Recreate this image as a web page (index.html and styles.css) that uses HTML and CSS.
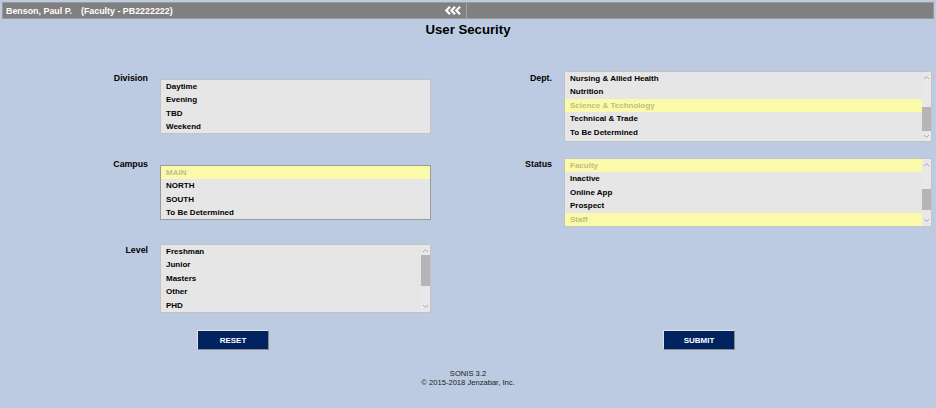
FILE: index.html
```html
<!DOCTYPE html>
<html>
<head>
<meta charset="utf-8">
<title>User Security</title>
<link rel="stylesheet" href="styles.css">
</head>
<body>
<div class="topbar">
  <div class="tb-left">
    <span class="who">Benson, Paul P.</span>
    <span class="role">(Faculty - PB2222222)</span>
    <svg class="collapse" width="18" height="9" viewBox="0 0 18 9">
      <polyline points="5,0.8 1.4,4.5 5,8.2" />
      <polyline points="10,0.8 6.4,4.5 10,8.2" />
      <polyline points="15,0.8 11.4,4.5 15,8.2" />
    </svg>
  </div>
  <div class="tb-right"></div>
</div>

<h1 class="title">User Security</h1>

<div class="form">
  <div class="lbl">Division</div>
  <div class="cell">
    <div class="list">
      <div class="items">
        <div class="item">Daytime</div>
        <div class="item">Evening</div>
        <div class="item">TBD</div>
        <div class="item">Weekend</div>
      </div>
    </div>
  </div>

  <div class="lbl">Dept.</div>
  <div class="cell">
    <div class="list">
      <div class="items">
        <div class="item">Nursing &amp; Allied Health</div>
        <div class="item">Nutrition</div>
        <div class="item sel">Science &amp; Technology</div>
        <div class="item">Technical &amp; Trade</div>
        <div class="item">To Be Determined</div>
      </div>
      <div class="sb">
        <div class="sb-arrow"><svg width="7" height="5" viewBox="0 0 7 5"><polyline points="1,4 3.5,1.5 6,4"/></svg></div>
        <div class="sb-track"><div class="sb-thumb thumb-dept"></div></div>
        <div class="sb-arrow"><svg width="7" height="5" viewBox="0 0 7 5"><polyline points="1,1 3.5,3.5 6,1"/></svg></div>
      </div>
    </div>
  </div>

  <div class="lbl">Campus</div>
  <div class="cell">
    <div class="list focus">
      <div class="items">
        <div class="item sel">MAIN</div>
        <div class="item">NORTH</div>
        <div class="item">SOUTH</div>
        <div class="item">To Be Determined</div>
      </div>
    </div>
  </div>

  <div class="lbl">Status</div>
  <div class="cell">
    <div class="list">
      <div class="items">
        <div class="item sel">Faculty</div>
        <div class="item">Inactive</div>
        <div class="item">Online App</div>
        <div class="item">Prospect</div>
        <div class="item sel">Staff</div>
      </div>
      <div class="sb">
        <div class="sb-arrow"><svg width="7" height="5" viewBox="0 0 7 5"><polyline points="1,4 3.5,1.5 6,4"/></svg></div>
        <div class="sb-track"><div class="sb-thumb thumb-status"></div></div>
        <div class="sb-arrow"><svg width="7" height="5" viewBox="0 0 7 5"><polyline points="1,1 3.5,3.5 6,1"/></svg></div>
      </div>
    </div>
  </div>

  <div class="lbl">Level</div>
  <div class="cell">
    <div class="list">
      <div class="items">
        <div class="item">Freshman</div>
        <div class="item">Junior</div>
        <div class="item">Masters</div>
        <div class="item">Other</div>
        <div class="item">PHD</div>
      </div>
      <div class="sb">
        <div class="sb-arrow"><svg width="7" height="5" viewBox="0 0 7 5"><polyline points="1,4 3.5,1.5 6,4"/></svg></div>
        <div class="sb-track"><div class="sb-thumb thumb-level"></div></div>
        <div class="sb-arrow"><svg width="7" height="5" viewBox="0 0 7 5"><polyline points="1,1 3.5,3.5 6,1"/></svg></div>
      </div>
    </div>
  </div>
</div>

<div class="actions">
  <div class="act-cell"><button class="btn">RESET</button></div>
  <div class="act-cell"><button class="btn">SUBMIT</button></div>
</div>

<div class="footer">
  <div>SONIS 3.2</div>
  <div>&copy; 2015-2018 Jenzabar, Inc.</div>
</div>
</body>
</html>
```

FILE: styles.css
```css
html, body {
  margin: 0;
  padding: 0;
}
body {
  background: #bccbe1;
  font-family: "Liberation Sans", Arial, sans-serif;
  color: #000;
  width: 936px;
  height: 408px;
  overflow: hidden;
}

/* top bar */
.topbar {
  display: flex;
  margin: 2px 2px 0 2px;
  height: 17px;
  background: #808080;
  border: 1px solid #9a9a9a;
  box-sizing: border-box;
}
.tb-left {
  box-sizing: border-box;
  width: 464px;
  display: flex;
  align-items: center;
  padding-left: 3px;
  padding-right: 3px;
  border-right: 1px solid #a4a4a4;
  color: #fff;
  font-weight: bold;
  font-size: 8.9px;
  white-space: nowrap;
}
.role {
  margin-left: 9px;
}
.collapse {
  margin-left: auto;
  fill: none;
  stroke: #fff;
  stroke-width: 2.2;
  stroke-linejoin: miter;
}
.tb-right {
  flex: 1;
}

/* title */
.title {
  margin: 3px 0 0 0;
  height: 16px;
  line-height: 16px;
  font-size: 13.2px;
  font-weight: bold;
  text-align: center;
}

/* form grid */
.form {
  display: grid;
  grid-template-columns: 148px 271px 109px 368px;
  column-gap: 12px;
  grid-auto-rows: 73px;
  row-gap: 13px;
  margin-top: 32px;
  width: 932px;
}
.lbl {
  text-align: right;
  align-self: start;
  padding-top: 2px;
  font-weight: bold;
  font-size: 8.8px;
  line-height: 13px;
}
.cell {
  align-self: center;
}

.list {
  display: flex;
  background: #e6e6e6;
  border: 1px solid #c3c3c3;
}
.list.focus {
  border-color: #9a9a9a;
}
.items {
  flex: 1;
  display: flex;
  flex-direction: column;
}
.item {
  height: 13.4px;
  line-height: 13.4px;
  padding-left: 5px;
  font-size: 8px;
  font-weight: bold;
  white-space: nowrap;
}
.item.sel {
  background: #fafaaa;
  color: #bfbf84;
}

/* scrollbar */
.sb {
  width: 9px;
  display: flex;
  flex-direction: column;
  background: #e8e8e8;
}
.sb-arrow {
  height: 10px;
  display: flex;
  align-items: center;
  justify-content: center;
}
.sb-arrow svg {
  fill: none;
  stroke: #a8a8a8;
  stroke-width: 1;
}
.sb-track {
  flex: 1;
}
.sb-thumb {
  background: #b5b5b5;
}
.thumb-dept {
  margin-top: 25px;
  height: 24px;
}
.thumb-status {
  margin-top: 20px;
  height: 21px;
}
.thumb-level {
  margin-top: 0;
  height: 31px;
}

/* buttons */
.actions {
  display: flex;
  width: 932px;
  margin-top: 15px;
}
.act-cell {
  flex: 1;
  display: flex;
  justify-content: center;
}
.btn {
  width: 72px;
  height: 20px;
  padding: 0;
  background: #012461;
  color: #fff;
  font-family: "Liberation Sans", Arial, sans-serif;
  font-weight: bold;
  font-size: 8px;
  border: 1px solid;
  border-color: #e4e4e4 #8a8a8a #8a8a8a #e4e4e4;
}

/* footer */
.footer {
  margin-top: 19px;
  text-align: center;
  font-size: 7.6px;
  line-height: 9px;
  color: #222;
}
```
